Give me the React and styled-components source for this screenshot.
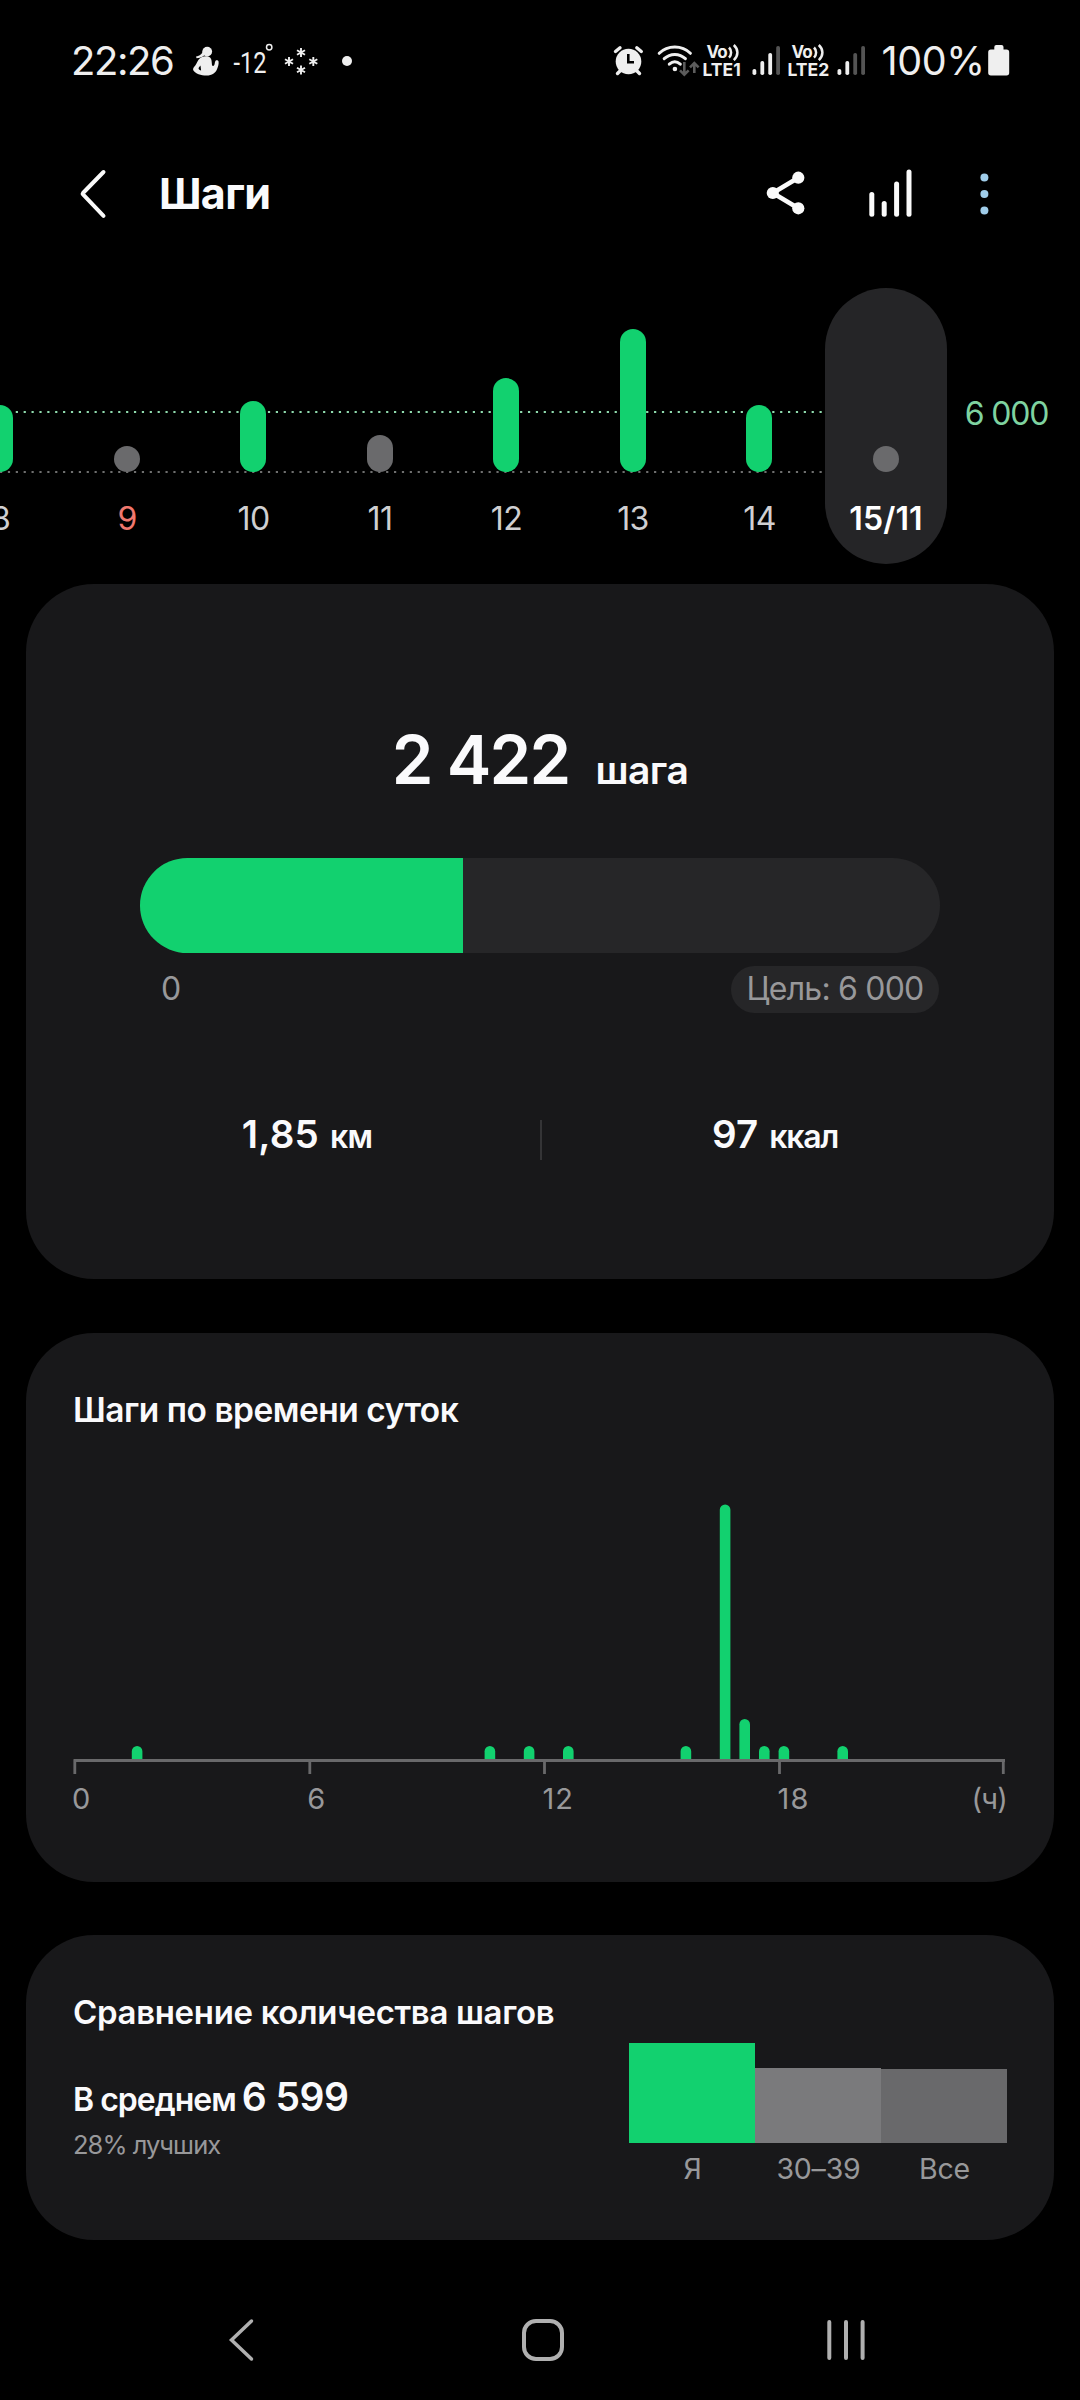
import React from 'react';
import styled, { createGlobalStyle, css } from 'styled-components';

const GREEN = '#12d16f';
const GOAL = 6000;
const STEPS = 2422;

const week = [
    { day: '8', height: 67, done: true },
    { day: '9', height: 26, holiday: true },
    { day: '10', height: 71, done: true },
    { day: '11', height: 37 },
    { day: '12', height: 94, done: true },
    { day: '13', height: 143, done: true },
    { day: '14', height: 67, done: true },
    { day: '15/11', height: 26, selected: true },
];

// half-hour slots of the day and the bar height in each
const slots = [
    { slot: 3, height: 13 },
    { slot: 21, height: 13 },
    { slot: 23, height: 13 },
    { slot: 25, height: 13 },
    { slot: 31, height: 13 },
    { slot: 33, height: 254.5 },
    { slot: 34, height: 40 },
    { slot: 35, height: 13 },
    { slot: 36, height: 13 },
    { slot: 39, height: 13 },
];

const groups = [
    { label: 'Я', height: 100, color: GREEN },
    { label: '30–39', height: 75, color: '#7a7a7c' },
    { label: 'Все', height: 74, color: '#69696b' },
];

const barPath = (x, height) => {
    const top = 259 - height;
    return `M${x} 259V${top + 5.3}a5.3 5.3 0 0 1 10.6 0V259z`;
}

const snowflakes = [[289, 61.5], [301, 52.5], [301, 70], [313.3, 61.5]];

const StatusIcons = function () {
    return (
        <svg width="164" height="40" viewBox="190 41 164 40" fill="#efefef">
            <circle cx="207.2" cy="51.6" r="4.9" />
            <path d="M203.5 50c-1.5 4-3.5 6-7.5 6.4l.6 1.8c4.6-.2 7.6-2 9.4-5.2z" />
            <path fillRule="evenodd" d="M201.5 57.2c3-1.2 6.5-1.2 8.6.4 1.8 1.600 1.5 4.400 1.9 7.400.4 1.300 1.600 1.200 2.300 0 .7-1.300.3-3.300 1.300-4.300.9-.8 2.800-.2 3 1 .3 2.500-.6 5-1.500 7.300-1.500 4-5 6.500-10.600 6.500-5.500 0-11.300-2-13.100-5-.9-1.800.2-3.200 1.500-4.600 2.300-2.600 2.900-7 6.600-8.700zM200.500 65.500c-1.300 1.300-2 2.400-1.900 3.300.2.900 1.200 1.400 2.500 1.700z" />
            <text x="233.5" y="73" fontSize="29" textLength="33" lengthAdjust="spacingAndGlyphs" fontFamily="Roboto, sans-serif">-12</text>
            <circle cx="269.2" cy="47.2" r="2.7" fill="none" stroke="#efefef" strokeWidth="1.5" />
            <g stroke="#efefef" strokeWidth="1.9">
                {snowflakes.map(([x, y]) => (
                    <path key={`${x}-${y}`} d={`M${x} ${y - 4.5}v9M${x - 4} ${y - 2.3}l8 4.6M${x - 4} ${y + 2.3}l8-4.6`} />
                ))}
            </g>
            <circle cx="347" cy="61" r="5" />
        </svg>
    )
}

const AlarmIcon = function () {
    return (
        <svg width="31" height="40" viewBox="612 41 31 40">
            <g stroke="#efefef" strokeLinecap="round" strokeWidth="3.4" fill="none">
                <path d="M614.500 51.500l4.500-3.700M640.300 51.500l-4.500-3.700" />
                <path d="M619.500 70.500l-3 3M635.500 70.500l3 3" />
            </g>
            <circle cx="627.5" cy="61.5" r="12.8" fill="#efefef" />
            <path d="M627.300 54v8.200h5.700" fill="none" stroke="#000" strokeWidth="2.6" />
        </svg>
    )
}

const WifiIcon = function () {
    return (
        <svg width="44" height="40" viewBox="655 41 44 40" fill="none">
            <g stroke="#efefef" strokeWidth="3" strokeLinecap="round">
                <path d="M658.200 53.300c8.500-8.400 22.700-8.400 31.200 0" />
                <path d="M663.200 58.700c6-5.700 15.200-5.700 21.200 0" />
                <path d="M668.300 64.200c3.400-3 7.600-3 11 0" />
            </g>
            <circle cx="673.9" cy="69" r="2.3" fill="#efefef" />
            <g stroke="#5c5c5c" strokeWidth="2.6">
                <path d="M683.300 62v12M679 70.300l4.300 4.300 4.300-4.300" />
                <path d="M693.300 73V63M689 67.300l4.300-4.300 4.300 4.300" />
            </g>
        </svg>
    )
}

const Signal = function ({ level }) {
    return (
        <svg width="30" height="40" viewBox="750 41 30 40">
            {[69, 61, 53, 46].map((top, i) => (
                <rect key={top} x={751.5 + i * 7.9} y={top} width="3.8" height={75 - top} rx="1.8" fill={i < level ? '#efefef' : '#545454'} />
            ))}
        </svg>
    )
}

const Volte = function ({ sim }) {
    return (
        <Badge>
            <BadgeTop>
                Vo
                <svg width="13" height="17" viewBox="0 0 13 17" fill="none" stroke="#efefef" strokeWidth="2.5">
                    <path d="M1 3.500c2.800 2.800 2.800 7.400 0 10.200M5.800 1c4.800 4.400 4.800 10.800 0 15.200" />
                </svg>
            </BadgeTop>
            <BadgeBottom>LTE{sim}</BadgeBottom>
        </Badge>
    )
}

const Battery = function () {
    return (
        <svg width="22" height="40" viewBox="988 41 22 40" fill="#efefef">
            <path d="M994.300 47a2 2 0 0 1 2-2h5.200a2 2 0 0 1 2 2v2.500h3a2.700 2.700 0 0 1 2.700 2.700v20.500a2.700 2.700 0 0 1-2.700 2.700h-15.600a2.700 2.700 0 0 1-2.700-2.700V52.200a2.700 2.700 0 0 1 2.700-2.700h3.400z" />
        </svg>
    )
}

const BackIcon = function () {
    return (
        <svg width="28" height="60" viewBox="79 163.500 28 60" fill="none">
            <path d="M103.500 171.500L83 192.500q-.6.700 0 1.400l20.500 21.400" stroke="#fafafa" strokeWidth="4" strokeLinecap="round" strokeLinejoin="round" />
        </svg>
    )
}

const ShareIcon = function () {
    return (
        <svg width="42" height="60" viewBox="765 163.500 42 60" fill="#fafafa">
            <path d="M798.300 177.200L772.800 192.500l25.500 15.300" fill="none" stroke="#fafafa" strokeWidth="4.6" />
            <circle cx="772.8" cy="192.5" r="6.1" />
            <circle cx="798.3" cy="177.2" r="6.1" />
            <circle cx="798.3" cy="207.8" r="6.1" />
        </svg>
    )
}

const ChartIcon = function () {
    return (
        <svg width="44" height="60" viewBox="868 163.500 44 60" fill="#fafafa">
            {[191.5, 200.5, 181, 169].map((top, i) => (
                <rect key={top} x={869.3 + i * 12.4} y={top} width="5" height={216.3 - top} rx="2.5" />
            ))}
        </svg>
    )
}

const MoreIcon = function () {
    return (
        <svg width="13" height="60" viewBox="978 163.500 13 60" fill="#a0cdea">
            <circle cx="984.4" cy="177" r="4" />
            <circle cx="984.4" cy="193.5" r="4" />
            <circle cx="984.4" cy="210" r="4" />
        </svg>
    )
}

const Day = function ({ day, height, done, holiday, selected }) {
    return (
        <DayColumn>
            <DayPill $selected={selected}>
                <DayTrack>
                    <DayBar $done={done} style={{ height }} />
                </DayTrack>
                <DayLabel $holiday={holiday} $selected={selected}>{day}</DayLabel>
            </DayPill>
        </DayColumn>
    )
}

const HoursChart = function () {
    return (
        <Hours width="934" height="274" viewBox="0 0 934 274">
            {slots.map(({ slot, height }) => (
                <path key={slot} d={barPath(slot * 19.6, height)} fill={GREEN} />
            ))}
            <path d="M0.500 260.500H932M1.800 260V274M236.800 260V274M471.500 260V274M706.500 260V274M930.300 260V274" fill="none" stroke="#69696b" strokeWidth="2.8" />
        </Hours>
    )
}

const App = function () {
    return (
        <Screen>
            <GlobalStyle />

            <StatusBar>
                <Clock>22:26</Clock>
                <StatusIcons />
                <StatusRight>
                    <AlarmIcon />
                    <WifiIcon />
                    <Volte sim="1" />
                    <Signal level={3} />
                    <Volte sim="2" />
                    <Signal level={2} />
                    <Percent>100%</Percent>
                    <Battery />
                </StatusRight>
            </StatusBar>

            <Header>
                <BackIcon />
                <Title>Шаги</Title>
                <Actions>
                    <ShareIcon />
                    <ChartIcon />
                    <MoreIcon />
                </Actions>
            </Header>

            <Week>
                <GuideLines width="824" height="200" viewBox="0 0 824 200">
                    <path d="M0 124H822" stroke="#8fdcae" />
                    <path d="M0 184H822" stroke="#6f6f6f" />
                </GuideLines>
                <Days>
                    {week.map(item => <Day key={item.day} {...item} />)}
                </Days>
                <GoalLabel>6 000</GoalLabel>
            </Week>

            <SummaryCard>
                <Count>
                    <CountValue>2 422</CountValue>
                    <CountUnit>шага</CountUnit>
                </Count>
                <Progress>
                    <ProgressFill style={{ width: `${STEPS / GOAL * 100}%` }} />
                </Progress>
                <Scale>
                    <span>0</span>
                    <GoalChip>Цель: 6 000</GoalChip>
                </Scale>
                <Stats>
                    <Stat>
                        <StatValue>1,85</StatValue>
                        <StatUnit>км</StatUnit>
                    </Stat>
                    <Divider />
                    <Stat>
                        <StatValue>97</StatValue>
                        <StatUnit $tight>ккал</StatUnit>
                    </Stat>
                </Stats>
            </SummaryCard>

            <HoursCard>
                <CardTitle $spacing="-0.5px" $size="33.5px">Шаги по времени суток</CardTitle>
                <HoursChart />
                <HourLabels>
                    <span>0</span>
                    <span>6</span>
                    <HourPair>12</HourPair>
                    <HourPair>18</HourPair>
                    <HourUnit>(ч)</HourUnit>
                </HourLabels>
            </HoursCard>

            <CompareCard>
                <CardTitle $spacing="-0.34px" $size="33px">Сравнение количества шагов</CardTitle>
                <CompareBody>
                    <div>
                        <Average>
                            <AverageText>В среднем</AverageText>
                            <AverageValue>6 599</AverageValue>
                        </Average>
                        <Rank>28% лучших</Rank>
                    </div>
                    <Groups>
                        {groups.map(({ label, height, color }) => (
                            <Group key={label}>
                                <GroupBar style={{ height }} $color={color} />
                                <GroupLabel>{label}</GroupLabel>
                            </Group>
                        ))}
                    </Groups>
                </CompareBody>
            </CompareCard>

            <NavBar width="1080" height="120" viewBox="0 2280 1080 120" fill="none" stroke="#b0b0b0" strokeLinecap="round">
                <path d="M251.500 2321l-20 19 20 19" strokeWidth="3.5" />
                <rect x="524" y="2321" width="38" height="38" rx="12" strokeWidth="4" />
                <path d="M829.300 2322v36M846 2322v36M862.600 2322v36" strokeWidth="4" />
            </NavBar>
        </Screen>
    )
}

export default App;

/* Styled Components Elements */

const GlobalStyle = createGlobalStyle`
    body {
        margin: 0;
        background: #000;
        color: #fafafc;
        font-family: Inter, Roboto, "Noto Sans", sans-serif;
    }

    svg {
        display: block;
        flex-shrink: 0;
    }
`;

const Screen = styled.div`
    display: flex;
    flex-direction: column;
    width: 1080px;
    height: 2400px;
    background: #000;
    overflow: hidden;
`;

const StatusBar = styled.div`
    display: flex;
    align-items: center;
    height: 122px;
    padding: 0 70.5px 0 71px;
    box-sizing: border-box;
    color: #efefef;
`;

const Clock = styled.span`
    width: 119px;
    font-size: 40px;
    line-height: 40px;
    letter-spacing: -1.43px;
`;

const StatusRight = styled.div`
    display: flex;
    align-items: center;
    margin-left: auto;

    svg + svg {
        margin-left: 12px;
    }
`;

const Badge = styled.div`
    display: flex;
    flex-direction: column;
    width: 42px;
    margin: 0 6px 0 3px;
    font-weight: 700;
    white-space: nowrap;

    svg + & {
        margin-left: 3px;
    }

    svg + & ~ & {
        margin-left: 7px;
    }
`;

const BadgeTop = styled.div`
    display: flex;
    padding-left: 4px;
    font-size: 17px;
    line-height: 17px;
    letter-spacing: -0.8px;

    svg {
        margin-left: 1px;
    }
`;

const BadgeBottom = styled.div`
    font-size: 17.5px;
    line-height: 17px;
`;

const Percent = styled.span`
    width: 106px;
    margin-left: 16px;
    font-size: 39.5px;
    line-height: 40px;
    letter-spacing: -0.4px;
`;

const Header = styled.div`
    display: flex;
    align-items: center;
    height: 143px;
    padding: 0 89px 0 79px;
`;

const Title = styled.h1`
    margin: -1px 0 0 52px;
    font-size: 43px;
    line-height: 50px;
    font-weight: 700;
    letter-spacing: -0.65px;
`;

const Actions = styled.div`
    display: flex;
    margin-left: auto;

    svg:nth-child(2) {
        margin: 0 66px 0 61px;
    }
`;

const Week = styled.div`
    position: relative;
    display: flex;
    height: 319px;
    padding-top: 23px;
    box-sizing: border-box;
    overflow: hidden;
`;

const GuideLines = styled.svg`
    position: absolute;
    left: 0;
    top: 23px;

    path {
        stroke-width: 2.2px;
        stroke-dasharray: 2.2 5.68;
    }
`;

const Days = styled.div`
    position: relative;
    display: flex;
    flex-shrink: 0;
    height: 276px;
    margin-left: -63.25px;
`;

const DayColumn = styled.div`
    display: flex;
    justify-content: center;
    width: 126.5px;
`;

const DayPill = styled.div`
    display: flex;
    flex-direction: column;
    align-items: center;
    width: 122px;
    border-radius: 61px;

    ${props => props.$selected && css`
        background: #252527;
    `}
`;

const DayTrack = styled.div`
    display: flex;
    align-items: flex-end;
    height: 184px;
`;

const DayBar = styled.div`
    width: 26px;
    border-radius: 13px;
    background: ${props => props.$done ? GREEN : '#6a6a6c'};
`;

const DayLabel = styled.span`
    margin-top: 26px;
    padding-left: 1px;
    font-size: 32px;
    line-height: 41px;
    letter-spacing: -0.6px;
    color: ${props => props.$holiday ? '#f0786e' : '#cfcfd1'};

    ${props => props.$selected && css`
        color: #fff;
        font-weight: 600;
        letter-spacing: 0.15px;
    `}
`;

const GoalLabel = styled.span`
    margin: 105px 0 0 16px;
    font-size: 32px;
    line-height: 41px;
    letter-spacing: -1.2px;
    color: #7fd3a0;
    white-space: nowrap;
`;

const Card = styled.section`
    flex-shrink: 0;
    margin: 0 26px;
    box-sizing: border-box;
    border-radius: 68px;
    background: #18181a;
`;

const SummaryCard = styled(Card)`
    height: 695px;
    padding: 136px 47px 0;
`;

const Count = styled.div`
    display: flex;
    justify-content: center;
    align-items: baseline;
    height: 80px;
    line-height: 80px;
    font-weight: 600;
`;

const CountValue = styled.span`
    font-size: 67px;
    letter-spacing: -1.8px;
`;

const CountUnit = styled.span`
    margin-left: 26px;
    font-size: 39px;
    letter-spacing: -0.5px;
`;

const Progress = styled.div`
    height: 95px;
    margin: 58px 67px 0;
    border-radius: 48px;
    background: #262628;
    overflow: hidden;
`;

const ProgressFill = styled.div`
    height: 100%;
    background: ${GREEN};
`;

const Scale = styled.div`
    display: flex;
    justify-content: space-between;
    margin: 13px 68px 0 88px;
    font-size: 32px;
    line-height: 46px;
    color: #98989a;
`;

const GoalChip = styled.span`
    width: 208px;
    height: 47px;
    border-radius: 24px;
    background: #262628;
    text-align: center;
    letter-spacing: -0.8px;
    white-space: nowrap;
`;

const Stats = styled.div`
    display: flex;
    margin: 107px -1px 0 1px;
`;

const Stat = styled.div`
    display: flex;
    flex: 1;
    justify-content: center;
    align-items: baseline;
    height: 28px;
    line-height: 28px;
    font-weight: 600;
`;

const StatValue = styled.span`
    font-size: 38.5px;
    letter-spacing: 0.2px;
`;

const StatUnit = styled.span`
    margin-left: 11px;
    font-size: 32px;
    letter-spacing: ${props => props.$tight ? '-1.27px' : '-0.72px'};
`;

const Divider = styled.div`
    width: 2px;
    height: 40px;
    background: #343436;
`;

const HoursCard = styled(Card)`
    height: 549px;
    margin-top: 54px;
    padding: 57px 47px 0;
`;

const CardTitle = styled.h2`
    margin: 0;
    font-size: ${props => props.$size};
    line-height: 40px;
    font-weight: 600;
    letter-spacing: ${props => props.$spacing};
    white-space: nowrap;
`;

const Hours = styled.svg`
    margin-top: 70px;
`;

const HourLabels = styled.div`
    display: grid;
    grid-template-columns: 235.2px 235.2px 235.2px 1fr auto;
    margin: 10px 0 0 -1px;
    font-size: 29px;
    line-height: 30px;
    color: #98989a;
`;

const HourPair = styled.span`
    letter-spacing: 1.2px;
`;

const HourUnit = styled.span`
    letter-spacing: -0.8px;
`;

const CompareCard = styled(Card)`
    height: 305px;
    margin-top: 53px;
    padding: 57px 47px 0;
`;

const CompareBody = styled.div`
    display: flex;
    justify-content: space-between;
`;

const Average = styled.div`
    display: flex;
    align-items: baseline;
    height: 40px;
    margin-top: 45px;
    line-height: 40px;
    font-weight: 600;
    white-space: nowrap;
`;

const AverageText = styled.span`
    font-size: 32px;
    letter-spacing: -1px;
`;

const AverageValue = styled.span`
    margin-left: 6px;
    font-size: 39px;
    letter-spacing: -0.5px;
`;

const Rank = styled.div`
    margin-top: 13px;
    font-size: 25.5px;
    line-height: 30px;
    letter-spacing: -0.95px;
    color: #98989a;
`;

const Groups = styled.div`
    display: flex;
    align-items: flex-end;
    margin-top: 11px;
`;

const Group = styled.div`
    width: 126px;
    text-align: center;
`;

const GroupBar = styled.div`
    background: ${props => props.$color};
`;

const GroupLabel = styled.div`
    margin-top: 11px;
    padding-left: 1px;
    font-size: 28.5px;
    line-height: 30px;
    letter-spacing: -0.2px;
    color: #98989a;
`;

const NavBar = styled.svg`
    margin-top: 40px;
`;
